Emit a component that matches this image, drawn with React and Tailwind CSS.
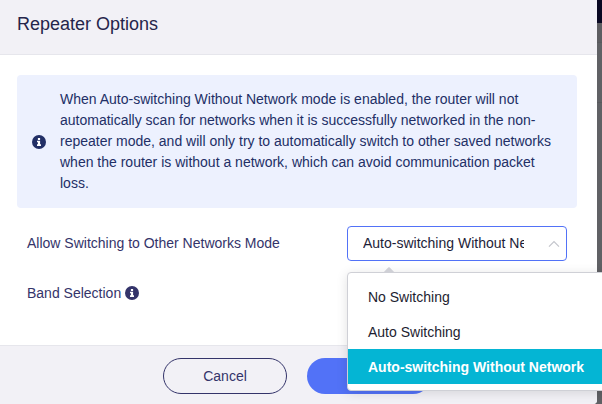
import React, { useState } from 'react';

const modes = ['No Switching', 'Auto Switching', 'Auto-switching Without Network'];

const InfoIcon = ({ className }) => (
  <svg className={className} width="14" height="14" viewBox="0 0 14 14" fill="none">
    <circle cx="7" cy="7" r="7" fill="currentColor" />
    <path d="M5.9 2.9h2.2v2H5.9zM5 5.7h3.1v3.6H9V11H5V9.3h.9V7.3H5z" fill="#fff" />
  </svg>
);

const ModeSelect = ({ value, onChange }) => (
  <div className="relative w-[220px]">
    <button
      type="button"
      className="flex h-[35px] w-full items-center justify-between rounded-[4px] border border-[#5272f7] bg-white pl-[15px] pr-[6px] text-[#1d1d38]"
    >
      <span className="w-[161px] overflow-hidden whitespace-nowrap text-left">{value}</span>
      <svg width="12" height="8" viewBox="0 0 12 8" fill="none" stroke="#c3c5cc" strokeWidth="1.2">
        <path d="M1 6.7 6 1.6l5 5.1" />
      </svg>
    </button>

    {/* Options */}
    <div className="absolute left-0 top-[46px] z-10 w-[280px] rounded-[4px] border border-[#cfd0d6] bg-white py-[6px] shadow-[0_2px_12px_rgba(0,0,0,0.12)]">
      <svg className="absolute left-[35px] -top-[6px]" width="12" height="6" viewBox="0 0 12 6">
        <path d="M0 6 5.2 .6Q6 0 6.8 .6L12 6Z" fill="#cfd0d6" />
      </svg>
      <ul>
        {modes.map((mode) => (
          <li
            key={mode}
            onClick={() => onChange(mode)}
            className={`h-[35px] cursor-pointer whitespace-nowrap px-5 pt-px leading-[35px] ${
              mode === value ? 'bg-[#04b5d4] font-bold text-white' : 'text-[#1d1d30]'
            }`}
          >
            {mode}
          </li>
        ))}
      </ul>
    </div>
  </div>
);

const App = () => {
  const [mode, setMode] = useState('Auto-switching Without Network');

  return (
    <div className="flex h-[404px] w-[602px] overflow-hidden bg-[#606165] font-['Liberation_Sans',Arial,sans-serif] text-[14px] text-[#34346a]">
      <div className="relative z-10 flex w-[597px] shrink-0 flex-col rounded-br-[4px] bg-white">
        <header className="h-[55px] border-b border-[#e6e6ec] bg-[#f2f1f6] px-[17px] pt-[11px] text-[18px] leading-[27px] text-[#25254b]">
          Repeater Options
        </header>

        <main className="flex-1 px-[17px] pt-5">
          <div className="flex h-[133px] w-[560px] items-center rounded-[4px] bg-[#edf1fe] pl-[15px] pr-4 text-[#222f66]">
            <InfoIcon className="shrink-0" />
            <p className="ml-[14px] leading-[21px]">
              When Auto-switching Without Network mode is enabled, the router will not automatically
              scan for networks when it is successfully networked in the non-repeater mode, and will
              only try to automatically switch to other saved networks when the router is without a
              network, which can avoid communication packet loss.
            </p>
          </div>

          <div className="mt-[18px] flex h-[35px] items-center justify-between pl-[10px] pr-[13px]">
            <span>Allow Switching to Other Networks Mode</span>
            <ModeSelect value={mode} onChange={setMode} />
          </div>

          <div className="mt-[15px] flex h-[35px] items-center gap-1 pl-[10px]">
            <span>Band Selection</span>
            <InfoIcon className="mb-px" />
          </div>
        </main>

        <footer className="flex h-[59px] shrink-0 justify-center gap-5 rounded-br-[4px] border-t border-[#e6e6ec] bg-[#f2f1f6] pr-[3px] pt-[12px]">
          <button type="button" className="h-9 w-[124px] rounded-full border border-[#34346a]">
            Cancel
          </button>
          <button type="button" aria-label="Apply" className="h-9 w-[124px] rounded-full bg-[#5272f7]" />
        </footer>
      </div>

      {/* Dimmed page behind the dialog */}
      <div className="flex-1 bg-[#606165]">
        <div className="h-[23px] bg-[#090822]" />
        <div className="h-[20px] border-b border-[#58595d] bg-[#5d5d61]" />
        <div className="h-[60px] border-b border-[#58595d]" />
      </div>
    </div>
  );
};

export default App;
